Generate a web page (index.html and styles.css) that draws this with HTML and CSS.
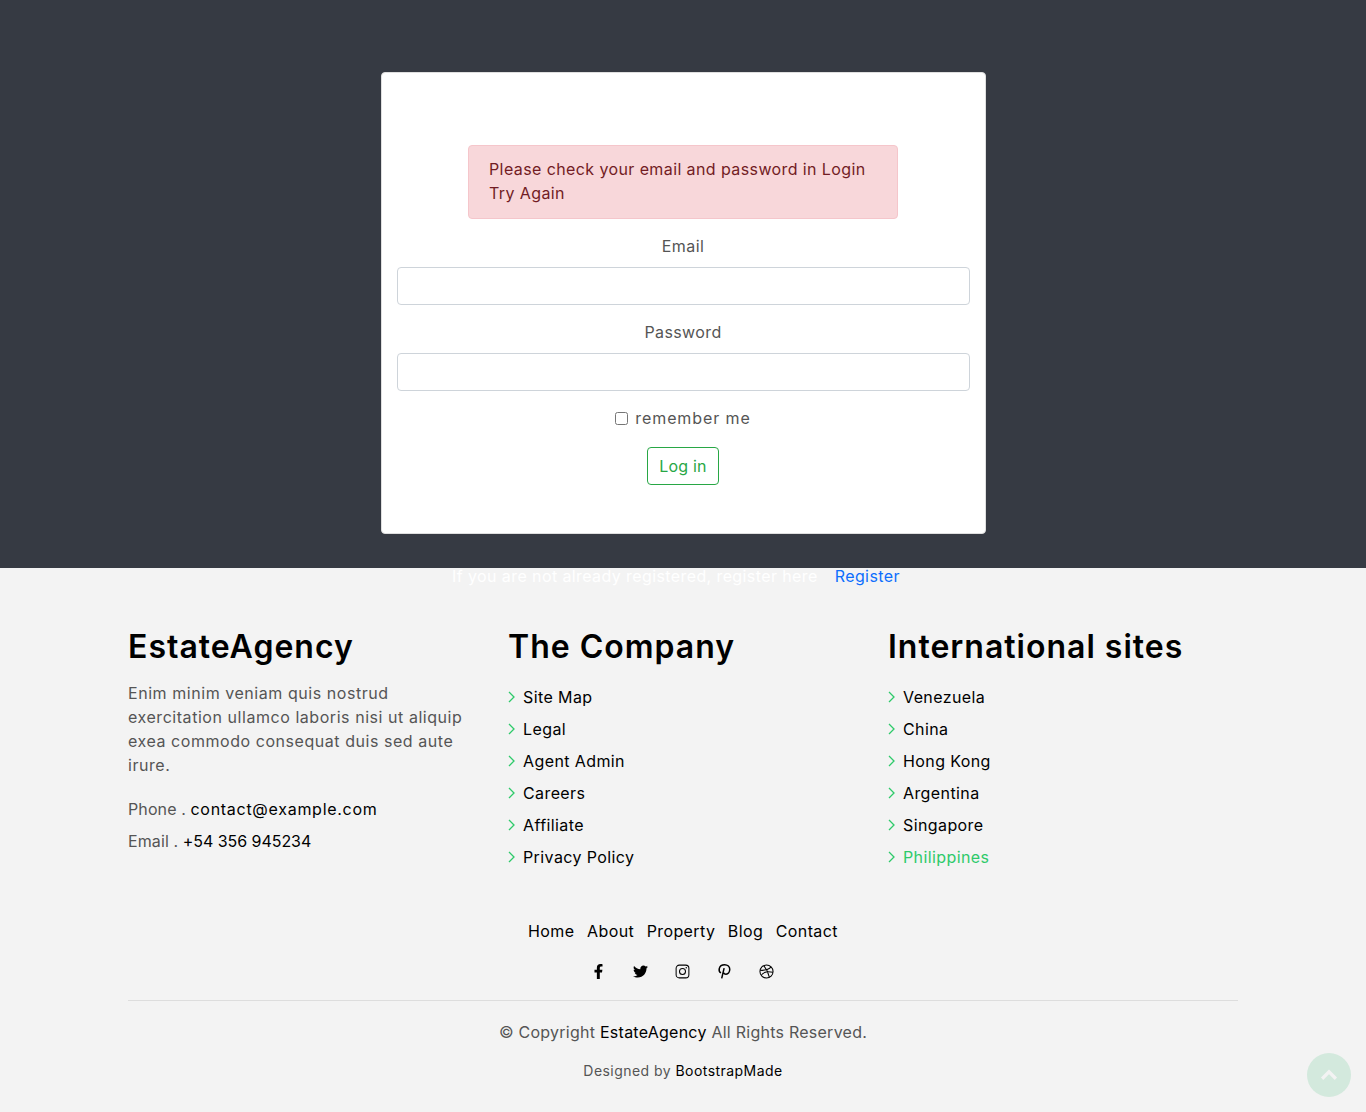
FILE: index.html
```html
<!DOCTYPE html>
<html lang="en">
<head>
<meta charset="utf-8">
<title>Login</title>
<link rel="stylesheet" href="styles.css">
</head>
<body>
<main class="login-section">
  <div class="card">
    <div class="alert">Please check your email and password in Login<br>Try Again</div>
    <form class="login-form">
      <label class="field-label" for="email">Email</label>
      <input class="field" id="email" type="email">
      <label class="field-label" for="password">Password</label>
      <input class="field" id="password" type="password">
      <label class="remember"><input class="check" type="checkbox"><span>remember me</span></label>
      <button class="btn-login" type="button">Log in</button>
    </form>
  </div>
  <p class="register"><span class="register-text">If you are not already registered, register here</span><a class="register-link" href="#">Register</a></p>
</main>
<footer class="footer">
  <div class="columns">
    <section>
      <h3 class="col-title">EstateAgency</h3>
      <p class="about">Enim minim veniam quis nostrud exercitation ullamco laboris nisi ut aliquip exea commodo consequat duis sed aute irure.</p>
      <ul class="contact">
        <li>Phone . <a class="contact-mail" href="#">contact@example.com</a></li>
        <li>Email . <a class="contact-phone" href="#">+54 356 945234</a></li>
      </ul>
    </section>
    <section>
      <h3 class="col-title">The Company</h3>
      <ul class="links">
        <li><svg class="chev" viewBox="0 0 8 16"><path d="M1 3 6 8 1 13"/></svg><a href="#">Site Map</a></li>
        <li><svg class="chev" viewBox="0 0 8 16"><path d="M1 3 6 8 1 13"/></svg><a href="#">Legal</a></li>
        <li><svg class="chev" viewBox="0 0 8 16"><path d="M1 3 6 8 1 13"/></svg><a href="#">Agent Admin</a></li>
        <li><svg class="chev" viewBox="0 0 8 16"><path d="M1 3 6 8 1 13"/></svg><a href="#">Careers</a></li>
        <li><svg class="chev" viewBox="0 0 8 16"><path d="M1 3 6 8 1 13"/></svg><a href="#">Affiliate</a></li>
        <li><svg class="chev" viewBox="0 0 8 16"><path d="M1 3 6 8 1 13"/></svg><a href="#">Privacy Policy</a></li>
      </ul>
    </section>
    <section>
      <h3 class="col-title">International sites</h3>
      <ul class="links">
        <li><svg class="chev" viewBox="0 0 8 16"><path d="M1 3 6 8 1 13"/></svg><a href="#">Venezuela</a></li>
        <li><svg class="chev" viewBox="0 0 8 16"><path d="M1 3 6 8 1 13"/></svg><a href="#">China</a></li>
        <li><svg class="chev" viewBox="0 0 8 16"><path d="M1 3 6 8 1 13"/></svg><a href="#">Hong Kong</a></li>
        <li><svg class="chev" viewBox="0 0 8 16"><path d="M1 3 6 8 1 13"/></svg><a href="#">Argentina</a></li>
        <li><svg class="chev" viewBox="0 0 8 16"><path d="M1 3 6 8 1 13"/></svg><a href="#">Singapore</a></li>
        <li><svg class="chev" viewBox="0 0 8 16"><path d="M1 3 6 8 1 13"/></svg><a class="active" href="#">Philippines</a></li>
      </ul>
    </section>
  </div>
  <nav class="footer-nav">
    <a href="#">Home</a><a href="#">About</a><a href="#">Property</a><a href="#">Blog</a><a href="#">Contact</a>
  </nav>
  <div class="socials">
    <a href="#" aria-label="Facebook"><svg class="ico" viewBox="0 0 320 512"><path class="solid" d="M279.14 288l14.22-92.66h-88.91v-60.13c0-25.35 12.42-50.06 52.24-50.06h40.42V6.26S260.43 0 225.36 0c-73.22 0-121.08 44.38-121.08 124.72v70.62H22.89V288h81.39v224h100.17V288z"/></svg></a>
    <a href="#" aria-label="Twitter"><svg class="ico" viewBox="0 0 512 512"><path class="solid" d="M459.37 151.716c.325 4.548.325 9.097.325 13.645 0 138.72-105.583 298.558-298.558 298.558-59.452 0-114.68-17.219-161.137-47.106 8.447.974 16.568 1.299 25.34 1.299 49.055 0 94.213-16.568 130.274-44.832-46.132-.975-84.792-31.188-98.112-72.772 6.498.974 12.995 1.624 19.818 1.624 9.421 0 18.843-1.3 27.614-3.573-48.081-9.747-84.143-51.98-84.143-102.985v-1.299c13.969 7.797 30.214 12.67 47.431 13.319-28.264-18.843-46.781-51.005-46.781-87.391 0-19.492 5.197-37.36 14.294-52.954 51.655 63.675 129.3 105.258 216.365 109.807-1.624-7.797-2.599-15.918-2.599-24.04 0-57.828 46.782-104.934 104.934-104.934 30.213 0 57.502 12.67 76.67 33.137 23.715-4.548 46.456-13.32 66.599-25.34-7.798 24.366-24.366 44.833-46.132 57.827 21.117-2.273 41.584-8.122 60.426-16.243-14.292 20.791-32.161 39.308-52.628 54.253z"/></svg></a>
    <a href="#" aria-label="Instagram"><svg class="ico" viewBox="0 0 16 16"><rect class="line" x="1.2" y="1.2" width="13.6" height="13.6" rx="3.4"/><circle class="line" cx="8" cy="8" r="3.2"/><circle class="solid" cx="12" cy="4" r=".8"/></svg></a>
    <a href="#" aria-label="Pinterest"><svg class="ico" viewBox="0 0 16 16"><path class="line-bold" d="M4.2 9.6C2.4 8.4 2 6.6 2.4 4.9 3 2.4 5.4.8 8.2.8c3.2 0 5.4 2.1 5.4 4.9 0 3-1.7 5.2-4 5.2-1.2 0-2.2-.7-2.5-1.6M7.6 4.4 5 15.4"/></svg></a>
    <a href="#" aria-label="Dribbble"><svg class="ico" viewBox="0 0 16 16"><circle class="line" cx="8" cy="8" r="7"/><path class="line" d="M5.1 1.7C7.4 4.4 9.7 8.4 11.1 14.2M1.2 6.7c4.4.4 8.8-.6 11.6-3.3M2.4 12.2C4.3 9.2 8.8 7.3 14.9 8.9"/></svg></a>
  </div>
  <div class="copyright">
    <p class="copy-line">© Copyright <a href="#">EstateAgency</a> All Rights Reserved.</p>
    <p class="credits">Designed by <a href="#">BootstrapMade</a></p>
  </div>
</footer>
<a class="back-top" href="#" aria-label="Back to top"><svg viewBox="0 0 16 16"><path d="M2.5 11 8 5.5l5.5 5.5"/></svg></a>
</body>
</html>
```
FILE: styles.css
```css
* { box-sizing: border-box; }
html, body { margin: 0; padding: 0; }
body {
  font-family: Inter, "Liberation Sans", sans-serif;
  font-size: 16px;
  line-height: 24px;
  color: #555;
  background: #f3f3f3;
  letter-spacing: .4px;
  overflow-x: hidden;
}
a { color: #000; text-decoration: none; }
p { margin: 0; }
ul { list-style: none; margin: 0; padding: 0; }

.login-section {
  height: 568px;
  background: #363a43;
  padding-top: 72px;
}
.card {
  width: 605px;
  margin: 0 auto;
  height: 462px;
  background: #fff;
  border: 1px solid #dfdfdf;
  border-radius: 4px;
  padding: 72px 15px 0;
  display: flex;
  flex-direction: column;
  align-items: center;
}
.alert {
  width: 430px;
  height: 74px;
  padding: 11px 20px 13px;
  margin-bottom: 15px;
  background: #f8d7da;
  border: 1px solid #f5c6cb;
  border-radius: 4px;
  color: #721c24;
}
.login-form {
  width: 100%;
  display: flex;
  flex-direction: column;
  align-items: center;
}
.field-label { margin-bottom: 9px; }
.field {
  display: block;
  width: 100%;
  height: 38px;
  margin-bottom: 15px;
  background: #fff;
  border: 1px solid #ced4da;
  border-radius: 4px;
}
.remember {
  display: flex;
  align-items: center;
  gap: 7px;
  margin-bottom: 17px;
  letter-spacing: .9px;
}
.check { width: 13px; height: 13px; margin: 1px 0 0; }
.btn-login {
  width: 72px;
  height: 38px;
  padding: 0 0 1px;
  font: inherit;
  letter-spacing: .2px;
  color: #28a745;
  background: #fff;
  border: 1px solid #28a745;
  border-radius: 4px;
}

.register {
  margin-top: 30px;
  text-align: center;
  padding-right: 14px;
}
.register-text { color: #fff; margin-right: 17px; }
.register-link { color: #0d6efd; }

.footer { padding: 60px 128px 31px; }
.columns {
  display: grid;
  grid-template-columns: repeat(3, 380px);
  margin-right: -30px;
  height: 291px;
}
.col-title {
  margin: 0 0 15px;
  font-size: 32px;
  line-height: 38px;
  font-weight: 600;
  color: #000;
  letter-spacing: 1px;
}
.about { width: 350px; margin-bottom: 20px; letter-spacing: .55px; }
.contact li { margin-bottom: 8px; letter-spacing: .1px; }
.contact-mail { letter-spacing: .72px; }
.contact-phone { letter-spacing: -.05px; }
.links li { display: flex; align-items: center; height: 24px; margin-bottom: 8px; }
.links { padding-top: 4px; }
.chev { width: 8px; height: 16px; margin-right: 7px; fill: none; stroke: #2eca6a; stroke-width: 1.3; }
.active { color: #2eca6a; }

.footer-nav {
  display: flex;
  justify-content: center;
  gap: 12.5px;
}
.socials {
  display: flex;
  justify-content: center;
  gap: 27px;
  margin-top: 16px;
  padding-right: 2px;
  height: 24px;
  align-items: center;
}
.socials a { display: flex; width: 15px; height: 15px; }
.ico { width: 15px; height: 15px; }
.solid { fill: #000; }
.line { fill: none; stroke: #000; stroke-width: 1.1; }
.line-bold { fill: none; stroke: #000; stroke-width: 1.6; }

.copyright {
  margin-top: 17px;
  padding-top: 19px;
  border-top: 1px solid #ddd;
  text-align: center;
  letter-spacing: .25px;
}
.copy-line { margin-bottom: 16px; }
.credits { font-size: 14px; line-height: 21px; letter-spacing: .45px; }

.back-top {
  position: fixed;
  right: 15px;
  bottom: 15px;
  width: 44px;
  height: 44px;
  border-radius: 50%;
  background: #d3e9dd;
  display: flex;
  align-items: center;
  justify-content: center;
}
.back-top svg { width: 20px; height: 20px; fill: none; stroke: #f3f3f3; stroke-width: 2.6; }
```
